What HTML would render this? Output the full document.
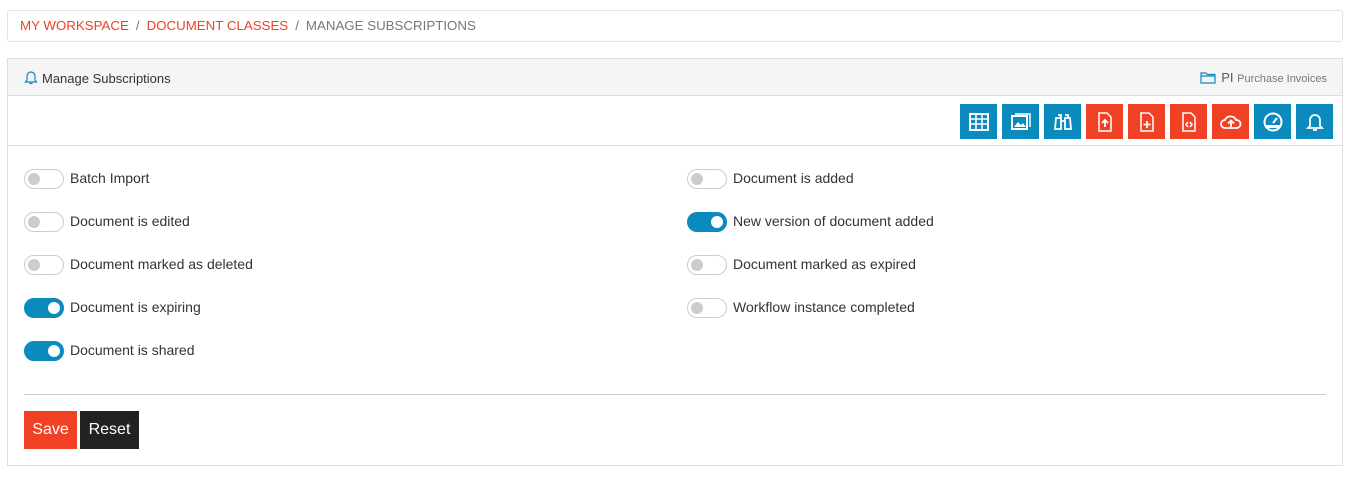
<!DOCTYPE html>
<html><head><style>
*{box-sizing:border-box;margin:0;padding:0}
body{width:1350px;height:484px;background:#fff;font-family:"Liberation Sans",sans-serif;color:#333;position:relative;overflow:hidden}
.bc{position:absolute;left:7px;top:10px;width:1336px;height:32px;border:1px solid #e3e3e3;border-radius:3px;font-size:13.3px;padding:7px 12px;color:#777}
.bc a{color:#f04124;text-decoration:none}
.bc span{margin:0 7px}
.panel{position:absolute;left:7px;top:58px;width:1336px;height:408px;border:1px solid #ddd}
.hd{height:37px;background:#f5f5f5;border-bottom:1px solid #ddd;position:relative;font-size:13px}
.hd .l{position:absolute;left:16px;top:11px;color:#333}
.hd .r{position:absolute;right:15px;top:11px;color:#555}
.tb{height:50px;border-bottom:1px solid #ddd;position:relative}
.btn{position:absolute;top:8px;width:37px;height:35px;display:flex;align-items:center;justify-content:center}
.b{background:#0a8abd}.rd{background:#f04124}
.tg{position:absolute;width:40px;height:20px;border-radius:10px;border:1px solid #ccc;background:#fff}
.tg::after{content:"";position:absolute;left:3px;top:3px;width:12px;height:12px;border-radius:50%;background:#ccc}
.tg.on{background:#0a8abd;border-color:#0a8abd}
.tg.on::after{left:23px;background:#fff}
.lb{position:absolute;font-size:14px;color:#333}
.hr{position:absolute;left:16px;top:335px;width:1302px;border-top:1px solid #ccc}
.sv,.rs{position:absolute;top:352px;height:38px;color:#fff;font-size:16px;line-height:38px;text-align:center}
.sv{left:16px;width:53px;background:#f04124}
.rs{left:72px;width:59px;background:#222}
</style></head><body>
<div class="bc"><a>MY WORKSPACE</a><span>/</span><a>DOCUMENT CLASSES</a><span>/</span>MANAGE SUBSCRIPTIONS</div>
<div class="panel">
<div class="hd"><div class="l"><svg width="14" height="15" viewBox="0 0 14 15" style="vertical-align:-2px;margin-right:4px"><path d="M3 10V6a4 4 0 0 1 8 0v4l1.5 2h-11z M5.5 13.5h3" fill="none" stroke="#0a8abd" stroke-width="1.2"/></svg>Manage Subscriptions</div>
<div class="r"><svg width="16" height="13" viewBox="0 0 16 13" style="vertical-align:-2px;margin-right:5px"><path d="M1 2h5l1.5 1.5H15V12H1z M1 5h14" fill="none" stroke="#0a8abd" stroke-width="1.2"/></svg>PI <span style="font-size:11px;color:#777">Purchase Invoices</span></div></div>
<div class="tb">
<div class="btn b" style="left:952px"><svg width="20" height="18"><rect x="1" y="1" width="18" height="16" fill="none" stroke="#fff" stroke-width="2"/><path d="M1 6h18M1 11h18M7 1v16M13 1v16" stroke="#fff" stroke-width="1.5"/></svg></div>
<div class="btn b" style="left:994px"><svg width="20" height="18"><rect x="1" y="3" width="15" height="13" fill="none" stroke="#fff" stroke-width="2"/><path d="M4 1h15v13" fill="none" stroke="#fff" stroke-width="1.5"/><path d="M3 14l4-5 3 3 2-2 3 4z" fill="#fff"/></svg></div>
<div class="btn b" style="left:1036px"><svg width="20" height="18"><path d="M3 5h5v11H2zM12 5h5l1 11h-6zM8 8h4M5 2h3v3M12 2h3v3" fill="none" stroke="#fff" stroke-width="1.8"/></svg></div>
<div class="btn rd" style="left:1078px"><svg width="16" height="20"><path d="M2 1h8l4 4v14H2z" fill="none" stroke="#fff" stroke-width="1.5"/><path d="M8 15V9M5 11l3-3 3 3" fill="none" stroke="#fff" stroke-width="1.8"/></svg></div>
<div class="btn rd" style="left:1120px"><svg width="16" height="20"><path d="M2 1h8l4 4v14H2z" fill="none" stroke="#fff" stroke-width="1.5"/><path d="M8 9v7M4.5 12.5h7" stroke="#fff" stroke-width="1.8"/></svg></div>
<div class="btn rd" style="left:1162px"><svg width="16" height="20"><path d="M2 1h8l4 4v14H2z" fill="none" stroke="#fff" stroke-width="1.5"/><path d="M7 10l-2 2.5 2 2.5M9 10l2 2.5-2 2.5" fill="none" stroke="#fff" stroke-width="1.5"/></svg></div>
<div class="btn rd" style="left:1204px"><svg width="22" height="16"><path d="M5 14a4 4 0 0 1 0-8 6 6 0 0 1 11 0 4 4 0 0 1 1 8z" fill="none" stroke="#fff" stroke-width="1.8"/><path d="M11 13V7M8 9.5l3-3 3 3" fill="none" stroke="#fff" stroke-width="1.8"/></svg></div>
<div class="btn b" style="left:1246px"><svg width="20" height="20"><circle cx="10" cy="10" r="8.5" fill="none" stroke="#fff" stroke-width="2"/><path d="M3 13h14v3H3z" fill="#fff"/><path d="M10 11l4-5" stroke="#fff" stroke-width="2"/></svg></div>
<div class="btn b" style="left:1288px"><svg width="18" height="20"><path d="M4 14V8a5 5 0 0 1 10 0v6l2 2H2z M7 18h4" fill="none" stroke="#fff" stroke-width="1.8"/></svg></div>
</div>
<div class="tg" style="left:16px;top:110px"></div><div class="lb" style="left:62px;top:111px">Batch Import</div>
<div class="tg" style="left:16px;top:153px"></div><div class="lb" style="left:62px;top:154px">Document is edited</div>
<div class="tg" style="left:16px;top:196px"></div><div class="lb" style="left:62px;top:197px">Document marked as deleted</div>
<div class="tg on" style="left:16px;top:239px"></div><div class="lb" style="left:62px;top:240px">Document is expiring</div>
<div class="tg on" style="left:16px;top:282px"></div><div class="lb" style="left:62px;top:283px">Document is shared</div>
<div class="tg" style="left:679px;top:110px"></div><div class="lb" style="left:725px;top:111px">Document is added</div>
<div class="tg on" style="left:679px;top:153px"></div><div class="lb" style="left:725px;top:154px">New version of document added</div>
<div class="tg" style="left:679px;top:196px"></div><div class="lb" style="left:725px;top:197px">Document marked as expired</div>
<div class="tg" style="left:679px;top:239px"></div><div class="lb" style="left:725px;top:240px">Workflow instance completed</div>
<div class="hr"></div>
<div class="sv">Save</div><div class="rs">Reset</div>
</div>
</body></html>
